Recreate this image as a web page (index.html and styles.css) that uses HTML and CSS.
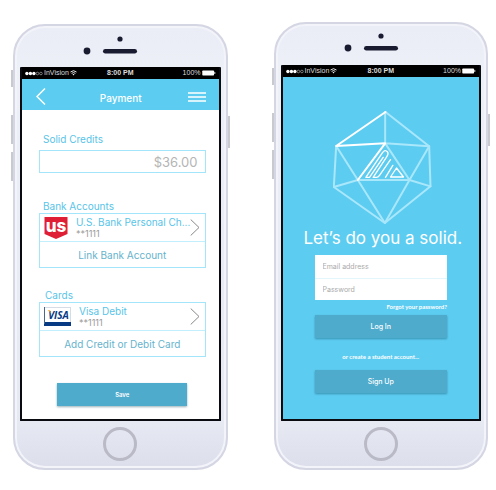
FILE: index.html
```html
<!DOCTYPE html>
<html lang="en">
<head>
<meta charset="utf-8">
<meta name="viewport" content="width=device-width, initial-scale=1">
<title>Solid</title>
<link rel="stylesheet" href="styles.css">
</head>
<body>
<main class="stage">
  <section class="phone phone-low" aria-label="Payment screen">
    <span class="key key-mute"></span><span class="key key-up"></span><span class="key key-down"></span><span class="key key-power"></span>
    <svg class="sensors" viewBox="0 0 80 41" aria-hidden="true">
      <circle cx="40" cy="13" r="2.6"/><circle cx="7" cy="25" r="3.4"/><rect x="23" y="23" width="34" height="4.6" rx="2.3"/>
    </svg>
    <div class="screen screen-white">
      <div class="status">
        <span class="carrier">
          <svg class="dots" viewBox="0 0 19 5" aria-hidden="true"><g fill="#fff"><circle cx="2" cy="2.5" r="1.8"/><circle cx="5.7" cy="2.5" r="1.8"/><circle cx="9.4" cy="2.5" r="1.8"/></g><g fill="none" stroke="#ccc" stroke-width=".6"><circle cx="13.1" cy="2.5" r="1.4"/><circle cx="16.8" cy="2.5" r="1.4"/></g></svg>
          <span>InVision</span>
          <svg class="wifi" viewBox="0 0 7 6" aria-hidden="true"><path d="M.5 2Q3.500-.6 6.500 2M1.600 3.400Q3.500 1.800 5.400 3.400" fill="none" stroke="#fff" stroke-width=".9"/><path d="M2.500 4.300Q3.500 3.600 4.500 4.300L3.500 5.600Z" fill="#fff"/></svg>
        </span>
        <span class="clock">8:00 PM</span>
        <span class="power"><span>100%</span>
          <svg class="battery" viewBox="0 0 15 6" aria-hidden="true"><rect x=".3" y=".3" width="12.600" height="5.400" rx=".8" fill="#fff"/><path d="M13.700 2v2" stroke="#fff"/></svg>
        </span>
      </div>
      <header class="nav">
        <button class="icon-btn" aria-label="Back"><svg class="back" viewBox="0 0 10 17"><path d="M9 .5L1 8.500L9 16.500"/></svg></button>
        <h1>Payment</h1>
        <button class="icon-btn icon-end" aria-label="Menu"><svg class="menu" viewBox="0 0 18 10"><path d="M0 1h18M0 5h18M0 9h18"/></svg></button>
      </header>
      <form class="payment">
        <label class="label" for="credits">Solid Credits</label>
        <input class="credits" id="credits" value="$36.00">
        <h2 class="label label-bank">Bank Accounts</h2>
        <div class="box">
          <button class="account" type="button">
            <svg class="logo-us" viewBox="0 0 23 22" aria-hidden="true"><path d="M0 0H23V17L11.500 22L0 17Z" fill="#df1f35"/><text x="11.500" y="15" text-anchor="middle">us</text></svg>
            <span class="details"><span class="name">U.S. Bank Personal Ch...</span><span class="digits">**1111</span></span>
            <svg class="chevron" viewBox="0 0 10 17" aria-hidden="true"><path d="M.7.500L9 8.500L.7 16.500"/></svg>
          </button>
          <button class="add" type="button">Link Bank Account</button>
        </div>
        <h2 class="label label-cards">Cards</h2>
        <div class="box">
          <button class="account" type="button">
            <svg class="logo-visa" viewBox="0 0 27 19" aria-hidden="true"><rect x=".5" y=".5" width="26" height="18" fill="#fff" stroke="#d5dce5"/><path d="M0 15h27v4H0Z" fill="#083a83"/><path d="M.5 0v17" stroke="#49668f"/><text x="14.500" y="11.500" text-anchor="middle">VISA</text><path d="M3.500 3.200H6L7.200 6.500Q6 4.500 3.500 3.200Z" fill="#f3a529"/></svg>
            <span class="details"><span class="name">Visa Debit</span><span class="digits">**1111</span></span>
            <svg class="chevron" viewBox="0 0 10 17" aria-hidden="true"><path d="M.7.500L9 8.500L.7 16.500"/></svg>
          </button>
          <button class="add" type="button">Add Credit or Debit Card</button>
        </div>
        <button class="btn btn-save" type="submit">Save</button>
      </form>
    </div>
    <div class="chin"><span class="home"></span></div>
  </section>

  <section class="phone" aria-label="Sign in screen">
    <span class="key key-mute"></span><span class="key key-up"></span><span class="key key-down"></span><span class="key key-power"></span>
    <svg class="sensors" viewBox="0 0 80 41" aria-hidden="true">
      <circle cx="40" cy="12" r="2.6"/><circle cx="7" cy="24" r="3.4"/><rect x="23" y="22" width="34" height="4.6" rx="2.3"/>
    </svg>
    <div class="screen screen-blue">
      <div class="status">
        <span class="carrier">
          <svg class="dots" viewBox="0 0 19 5" aria-hidden="true"><g fill="#fff"><circle cx="2" cy="2.5" r="1.8"/><circle cx="5.7" cy="2.5" r="1.8"/><circle cx="9.4" cy="2.5" r="1.8"/></g><g fill="none" stroke="#ccc" stroke-width=".6"><circle cx="13.1" cy="2.5" r="1.4"/><circle cx="16.8" cy="2.5" r="1.4"/></g></svg>
          <span>InVision</span>
          <svg class="wifi" viewBox="0 0 7 6" aria-hidden="true"><path d="M.5 2Q3.500-.6 6.500 2M1.600 3.400Q3.500 1.800 5.400 3.400" fill="none" stroke="#fff" stroke-width=".9"/><path d="M2.500 4.300Q3.500 3.600 4.500 4.300L3.500 5.600Z" fill="#fff"/></svg>
        </span>
        <span class="clock">8:00 PM</span>
        <span class="power"><span>100%</span>
          <svg class="battery" viewBox="0 0 15 6" aria-hidden="true"><rect x=".3" y=".3" width="12.600" height="5.400" rx=".8" fill="#fff"/><path d="M13.700 2v2" stroke="#fff"/></svg>
        </span>
      </div>
      <form class="login">
        <div class="hero">
          <svg class="gem" viewBox="100 32 296 345" aria-hidden="true">
            <g fill="none" stroke-linecap="round" stroke-linejoin="round">
              <g stroke="#a9e7fb" stroke-width="6">
                <path d="M257 38L388 141L392 261L255 371L102 263L109 140"/>
                <path d="M256 38V132L388 141L329 242L392 261M329 242L255 371L174 242L102 263M109 140L174 242H329L256 132"/>
              </g>
              <path d="M257 38L109 140L256 132L174 242" stroke="#fff" stroke-width="6"/>
              <g stroke="#fff" stroke-width="4">
                <path d="M250 174L209 234H198L248 160Q256 149 263 158Q267 163 261 172L220 234H230Q235 234 239 228L272 181"/>
                <path d="M257 234L279 198"/>
                <path d="M272 233L290 206L311 233Z"/>
              </g>
            </g>
          </svg>
          <h1 class="tagline">Let’s do you a solid.</h1>
        </div>
        <div class="fields">
          <input type="email" placeholder="Email address" aria-label="Email address">
          <input type="password" placeholder="Password" aria-label="Password">
        </div>
        <a class="forgot" href="#">Forgot your password?</a>
        <button class="btn" type="submit">Log In</button>
        <p class="or">or create a student account...</p>
        <button class="btn" type="button">Sign Up</button>
      </form>
    </div>
    <div class="chin"><span class="home"></span></div>
  </section>
</main>
</body>
</html>
```
FILE: styles.css
```css
* { box-sizing: border-box; }

body {
  margin: 0;
  background: #fff;
  font-family: Inter, "Open Sans", sans-serif;
}

h1, h2, p { margin: 0; font-weight: 400; }

button, input {
  margin: 0;
  padding: 0;
  border: 0;
  border-radius: 0;
  background: none;
  font-family: inherit;
}

svg { display: block; flex: none; }

.stage {
  display: grid;
  grid-template-columns: repeat(2, minmax(0, 1fr));
  gap: 46px;
  align-items: start;
  padding: 22px 8px 20px 13px;
}

/* Handset */
.phone {
  position: relative;
  padding: 0 5px;
  border: 2px solid #d5d6e3;
  border-radius: 32px;
  background: linear-gradient(#eaecf6, #eef0f8 10%, #e6e8f2 90%, #dcdeeb);
  box-shadow: inset 0 0 0 2px #f3f4fa;
}

.phone-low { margin-top: 2px; }

.key {
  position: absolute;
  left: -4px;
  width: 2px;
  height: 29px;
  background: #c9cad0;
}
.key-mute { top: 44px; height: 17px; }
.key-up { top: 89px; }
.key-down { top: 126px; }
.key-power { top: 90px; left: auto; right: -4px; height: 32px; }

.sensors { width: 80px; height: 41px; margin: 0 auto; fill: #191b30; }

.screen { border: 2px solid #090b10; border-top: 0; border-radius: 1px; }
.screen-white { background: #fff; }
.screen-blue { background: #5dccf1; }

.chin { display: flex; justify-content: center; padding: 6px 0 7px; }
.home {
  width: 34px;
  height: 34px;
  border: 3px solid #b9bac6;
  border-radius: 50%;
}

/* Status bar */
.status {
  display: grid;
  grid-template-columns: 1fr auto 1fr;
  align-items: center;
  height: 12px;
  padding: 0 3px;
  background: #000;
  color: #ddd;
  font-family: "Liberation Sans", Arial, sans-serif;
  font-size: 7px;
  line-height: 12px;
}
.carrier, .power { display: flex; align-items: center; gap: 1px; }
.power { justify-content: flex-end; }
.clock { font-weight: 700; }
.dots { width: 18px; height: 5px; }
.wifi { width: 7px; height: 6px; }
.battery { width: 14px; height: 6px; }

/* Payment */
.nav {
  display: grid;
  grid-template-columns: 1fr auto 1fr;
  align-items: center;
  height: 31px;
  padding: 4px 13px 0 14px;
  background: #5dccf1;
  color: #fff;
}
.nav h1 { padding-top: 2px; font-size: 10px; font-weight: 500; line-height: 14px; }
.icon-btn { justify-self: start; }
.icon-end { justify-self: end; }
.icon-btn svg { fill: none; stroke: #fff; stroke-width: 1.5; }
.back { width: 10px; height: 17px; }
.menu { width: 18px; height: 10px; }

.payment {
  display: flex;
  flex-direction: column;
  padding: 22px 13px 13px 17px;
}
.label {
  padding: 0 4px;
  color: #58c4e8;
  font-size: 10px;
  line-height: 14px;
}
.label-bank { margin-top: 26px; }
.label-cards { margin-top: 20px; padding-left: 6px; }
.credits {
  width: 100%;
  height: 23px;
  margin-top: 4px;
  padding: 0 7px;
  border: 1px solid #a3e5fb;
  color: #b5b5b5;
  font-size: 13px;
  text-align: right;
}
.box { border: 1px solid #a3e5fb; }
.account {
  display: flex;
  align-items: center;
  gap: 8px;
  width: 100%;
  height: 27px;
  padding: 0 5px 0 4px;
  text-align: left;
}
.details { flex: 1; min-width: 0; }
.name, .digits { display: block; white-space: nowrap; }
.name { color: #58c4e8; font-size: 10px; line-height: 12px; }
.digits { color: #999; font-size: 9px; line-height: 11px; }
.add {
  width: 100%;
  height: 26px;
  border-top: 1px solid #c3effc;
  color: #66b3cc;
  font-size: 10px;
}
.chevron { width: 10px; height: 17px; fill: none; stroke: #888; }
.logo-us { width: 24px; height: 22px; }
.logo-us text { fill: #fff; font-size: 17px; font-weight: 800; }
.logo-visa { width: 27px; height: 19px; }
.logo-visa text { fill: #083a83; font: italic 700 10px "Open Sans", sans-serif; }

.btn {
  width: 100%;
  height: 23px;
  background: #4eabcc;
  box-shadow: 0 1px 2px rgb(0 60 80 / 40%);
  color: #fff;
  font-size: 7px;
  font-weight: 500;
}
.btn-save { align-self: center; width: 78%; margin-top: 26px; font-size: 6px; font-weight: 600; }

/* Sign in */
.login {
  display: flex;
  flex-direction: column;
  padding: 33px 32px 26px;
}
.hero {
  display: flex;
  flex-direction: column;
  align-items: center;
  padding-left: 4px;
}
.gem { width: 99px; height: 115px; }
.tagline {
  margin-top: 2px;
  color: #fff;
  font-size: 17px;
  line-height: 22px;
  white-space: nowrap;
}
.fields { margin-top: 6px; background: #fff; }
.fields input { display: block; width: 100%; height: 23px; padding: 0 8px; font-size: 7px; }
.fields input + input { border-top: 1px solid #e3f6fc; height: 22px; }
.fields input::placeholder { color: #aaa; opacity: 1; }
.forgot, .or {
  color: #fff;
  font-family: Lato, sans-serif;
  font-size: 6px;
  font-weight: 700;
  line-height: 8px;
}
.forgot { align-self: flex-end; margin: 3px 0 4px; text-decoration: none; }
.or { margin: 15px 0 9px; text-align: center; }
```
